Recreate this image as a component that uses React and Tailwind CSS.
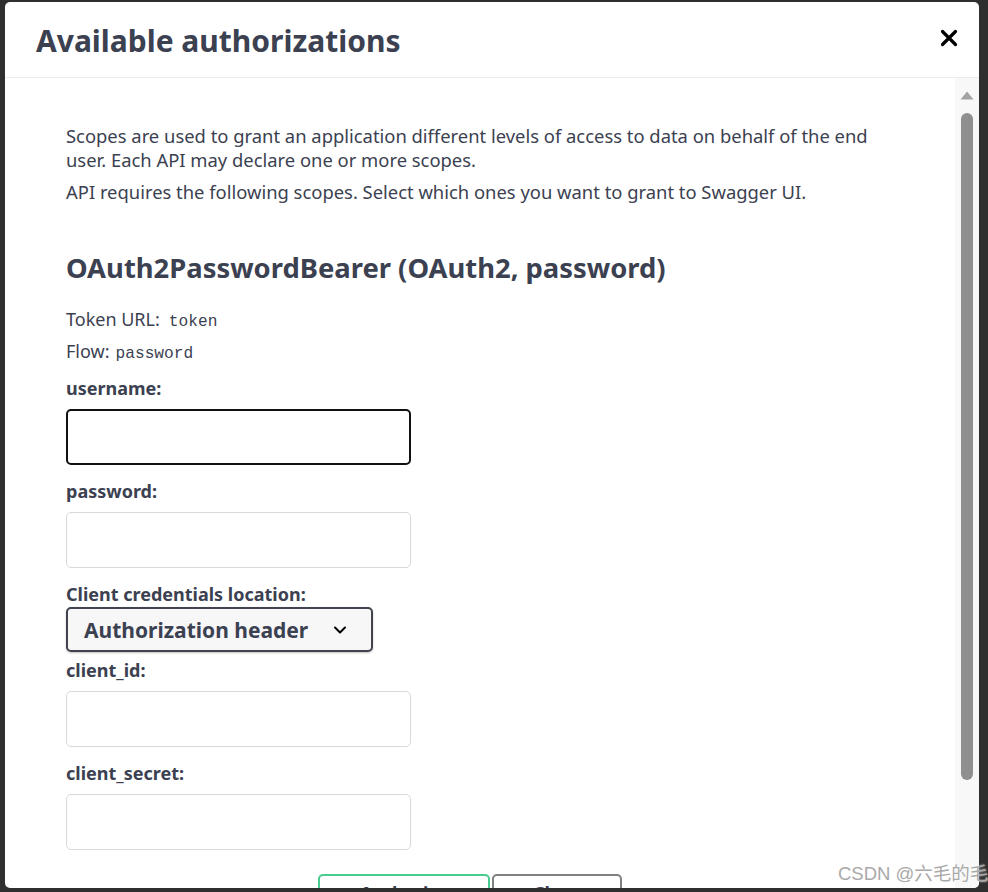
import React from "react";

const sans = { fontFamily: '"Noto Sans", "Noto Sans CJK SC", sans-serif' };
const mono = { fontFamily: '"Liberation Mono", monospace' };

function Label({ children, className = "" }) {
  return (
    <div className={`text-[18px] leading-[24px] font-bold text-[#3b4151] ${className}`}>{children}</div>
  );
}

function Field({ focused }) {
  return focused ? (
    <div className="mt-[9px] w-[345px] h-[56px] rounded-[5px] border-2 border-[#111] bg-white" />
  ) : (
    <div className="mt-[9px] w-[345px] h-[56px] rounded-[5px] border border-[#d9d9d9] bg-white" />
  );
}

export default function App() {
  return (
    <div className="w-[988px] h-[892px] bg-[#2f2f2f] overflow-hidden relative" style={sans}>
      <div className="ml-[5px] mt-[2px] w-[974px] h-[886px] rounded-[5px] bg-white flex flex-col overflow-hidden">
        {/* header */}
        <div className="h-[76px] shrink-0 border-b border-[#ebebeb] flex items-center justify-between pl-[31px] pr-[21px] pt-[3px]">
          <h3 className="text-[30px] leading-[40px] font-bold text-[#3b4151]">Available authorizations</h3>
          <svg width="18" height="18" viewBox="0 0 18 18" className="-mt-[7px]">
            <path d="M2.5 2.5 L15.5 15.5 M15.5 2.5 L2.5 15.5" stroke="#000" strokeWidth="3.2" strokeLinecap="round" />
          </svg>
        </div>
        {/* body */}
        <div className="flex flex-1 min-h-0">
          <div className="flex-1 pl-[61px] pr-[81px] pt-[46px] text-[#3b4151]">
            <p className="text-[18.4px] leading-[24px] whitespace-nowrap">
              Scopes are used to grant an application different levels of access to data on behalf of the end
              <br />
              user. Each API may declare one or more scopes.
            </p>
            <p className="mt-[8px] text-[18.4px] leading-[24px] whitespace-nowrap">
              API requires the following scopes. Select which ones you want to grant to Swagger UI.
            </p>
            <h4 className="mt-[46px] text-[27.4px] leading-[36px] font-bold whitespace-nowrap">
              OAuth2PasswordBearer (OAuth2, password)
            </h4>
            <p className="mt-[21px] h-[24px] text-[18px] leading-[24px] flex items-baseline">
              <span>Token URL:</span>
              <code className="ml-[9px] text-[16.2px] leading-none text-[#3b4151]" style={mono}>
                token
              </code>
            </p>
            <p className="mt-[8px] h-[24px] text-[18px] leading-[24px] flex items-baseline">
              <span>Flow:</span>
              <code className="ml-[6px] text-[16.2px] leading-none text-[#3b4151]" style={mono}>
                password
              </code>
            </p>

            <Label className="mt-[13px]">username:</Label>
            <Field focused />

            <Label className="mt-[14px]">password:</Label>
            <Field />

            <Label className="mt-[14px]">Client credentials location:</Label>
            <div className="mt-[1px] w-[307px] h-[45px] rounded-[5px] border-2 border-[#41444e] bg-[#f7f7f7] shadow-[0_1px_2px_rgba(0,0,0,0.25)] flex items-center pl-[16px] pr-[24px] justify-between">
              <span className="text-[21px] leading-[28px] font-bold text-[#3b4151] whitespace-nowrap">Authorization header</span>
              <svg width="14" height="10" viewBox="0 0 14 10">
                <path d="M2 2.5 L7 7.5 L12 2.5" fill="none" stroke="#000" strokeWidth="2" strokeLinecap="round" strokeLinejoin="round" />
              </svg>
            </div>

            <Label className="mt-[6px]">client_id:</Label>
            <Field />

            <Label className="mt-[14px]">client_secret:</Label>
            <Field />

            <div className="mt-[24px] flex justify-center gap-[2px]">
              <button className="w-[172px] h-[38px] rounded-[5px] border-2 border-[#49cc90] bg-white text-[18px] leading-[24px] font-bold text-[#3b4151]">
                Authorize
              </button>
              <button className="w-[130px] h-[38px] rounded-[5px] border-2 border-[#808080] bg-white text-[18px] leading-[24px] font-bold text-[#3b4151]">
                Close
              </button>
            </div>
          </div>
          {/* scrollbar */}
          <div className="w-[24px] shrink-0 bg-[#f8f8f8] flex flex-col items-center pt-[13px]">
            <svg width="14" height="9" viewBox="0 0 14 9">
              <path d="M7 0.5 L13.5 8.5 L0.5 8.5 Z" fill="#a3a3a3" />
            </svg>
            <div className="mt-[13px] w-[12px] h-[667px] rounded-full bg-[#8f8f8f]" />
          </div>
        </div>
      </div>
      <div
        className="absolute left-[838px] top-[862px] text-[18.5px] leading-[24px] text-[#a9a9a9] whitespace-nowrap [text-shadow:0_0_2px_rgba(255,255,255,0.9)]"
        style={{ fontFamily: '"Liberation Sans", "Noto Sans CJK SC", sans-serif' }}
      >
        CSDN @六毛的毛
      </div>
    </div>
  );
}
